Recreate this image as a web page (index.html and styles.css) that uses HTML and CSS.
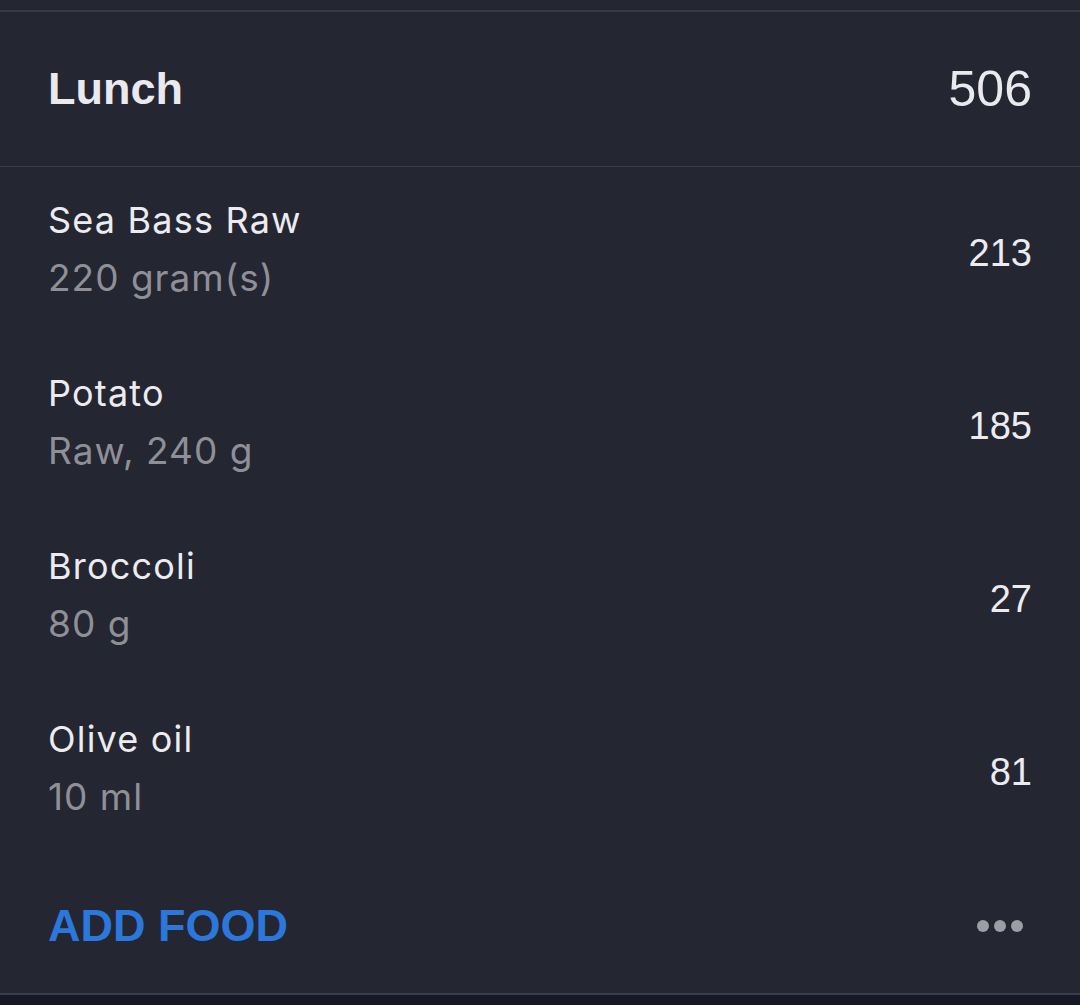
FILE: index.html
```html
<!DOCTYPE html>
<html>
<head>
<meta charset="utf-8">
<link rel="stylesheet" href="styles.css">
</head>
<body>
<div class="card">
  <div class="top-gap"></div>
  <div class="header">
    <div class="title">Lunch</div>
    <div class="total">506</div>
  </div>
  <div class="row">
    <div class="info"><div class="name">Sea Bass Raw</div><div class="detail">220 gram(s)</div></div>
    <div class="cal">213</div>
  </div>
  <div class="row">
    <div class="info"><div class="name">Potato</div><div class="detail">Raw, 240 g</div></div>
    <div class="cal">185</div>
  </div>
  <div class="row">
    <div class="info"><div class="name">Broccoli</div><div class="detail">80 g</div></div>
    <div class="cal">27</div>
  </div>
  <div class="row">
    <div class="info"><div class="name">Olive oil</div><div class="detail">10 ml</div></div>
    <div class="cal">81</div>
  </div>
  <div class="footer">
    <div class="add">ADD FOOD</div>
    <div class="more"><span class="dot"></span><span class="dot"></span><span class="dot"></span></div>
  </div>
</div>
<div class="below"></div>
</body>
</html>
```

FILE: styles.css
```css
html, body {
  margin: 0;
  padding: 0;
  background: #161925;
}
.card {
  background: #242632;
  border-bottom: 2px solid #3a3c48;
}
.top-gap {
  height: 10px;
  border-bottom: 2px solid #363845;
}
.header {
  height: 155px;
  box-sizing: border-box;
  border-bottom: 1px solid #3a3c48;
  display: flex;
  align-items: center;
  justify-content: space-between;
  padding: 0 48px;
  font-family: "Liberation Sans", Arial, sans-serif;
  color: #e9e9ee;
}
.title {
  font-size: 45px;
  font-weight: bold;
}
.total {
  font-size: 50px;
}
.row {
  height: 173px;
  display: flex;
  align-items: center;
  justify-content: space-between;
  padding: 0 48px;
}
.info {
  display: flex;
  flex-direction: column;
  margin-bottom: 10px;
  font-family: Inter, "Liberation Sans", sans-serif;
}
.name {
  font-size: 36px;
  letter-spacing: 1.2px;
  line-height: 57px;
  color: #ececf0;
}
.detail {
  font-size: 37px;
  letter-spacing: 1px;
  line-height: 57px;
  color: #8f9097;
}
.cal {
  font-family: "Liberation Sans", Arial, sans-serif;
  font-size: 38px;
  color: #ececf0;
}
.footer {
  height: 134px;
  display: flex;
  align-items: center;
  justify-content: space-between;
  padding: 0 57px 0 48px;
}
.add {
  font-family: "Liberation Sans", Arial, sans-serif;
  font-size: 45px;
  font-weight: bold;
  color: #2b77db;
}
.more {
  display: flex;
  gap: 5px;
}
.dot {
  width: 12px;
  height: 12px;
  border-radius: 50%;
  background: #9c9da5;
}
.below {
  height: 20px;
}
```
